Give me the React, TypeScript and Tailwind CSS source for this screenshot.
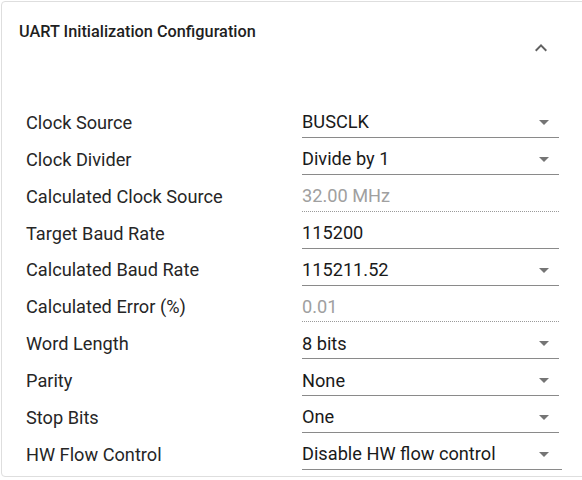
import React from 'react';

type Row = {
  label: string;
  value: string;
  kind: 'select' | 'input' | 'readonly';
};

const rows: Row[] = [
  { label: 'Clock Source', value: 'BUSCLK', kind: 'select' },
  { label: 'Clock Divider', value: 'Divide by 1', kind: 'select' },
  { label: 'Calculated Clock Source', value: '32.00 MHz', kind: 'readonly' },
  { label: 'Target Baud Rate', value: '115200', kind: 'input' },
  { label: 'Calculated Baud Rate', value: '115211.52', kind: 'select' },
  { label: 'Calculated Error (%)', value: '0.01', kind: 'readonly' },
  { label: 'Word Length', value: '8 bits', kind: 'select' },
  { label: 'Parity', value: 'None', kind: 'select' },
  { label: 'Stop Bits', value: 'One', kind: 'select' },
  { label: 'HW Flow Control', value: 'Disable HW flow control', kind: 'select' },
];

function ArrowDrop() {
  return (
    <svg width="24" height="24" viewBox="0 0 24 24" className="shrink-0 fill-[#757575]">
      <path d="M7 10l5 5 5-5z" />
    </svg>
  );
}

export default function App() {
  return (
    <div className="w-[582px] h-[480px] overflow-hidden bg-white pt-px pl-px font-['Roboto',sans-serif]">
      <div className="w-[600px] h-[476px] border border-[#dedede] rounded-[4px] bg-white">
        {/* Header */}
        <div className="flex justify-between h-[102px]">
          <h2 className="pl-[17px] pt-[18px] text-[16.3px] leading-[24px] font-medium text-[#1f1f1f]">
            UART Initialization Configuration
          </h2>
          <svg width="24" height="24" viewBox="0 0 24 24" className="mt-[34px] mr-[47px] fill-[#616161]">
            <path d="M12 8l-6 6 1.41 1.41L12 10.83l4.59 4.58L18 14z" />
          </svg>
        </div>

        {/* Fields */}
        <div className="flex flex-col">
          {rows.map((row, i) => (
            <div key={row.label} className="flex h-[36.9px] pt-[3px]">
              <div className="w-[300px] pl-[24px] h-[31px] flex items-center text-[18.2px] text-[#262626]">
                {row.label}
              </div>
              <div
                className={`h-[31px] flex items-center justify-between text-[18.2px] ${
                  i === rows.length - 1 ? 'w-[260px]' : 'w-[257px]'
                } ${
                  row.kind === 'readonly'
                    ? 'border-b border-dotted border-[#9a9a9a] text-[#a0a0a0]'
                    : 'border-b border-[#8a8a8a] text-[#1a1a1a]'
                }`}
              >
                <span>{row.value}</span>
                {row.kind === 'select' && (
                  <span className={i === rows.length - 1 ? 'mr-[6px]' : 'mr-[3px]'}>
                    <ArrowDrop />
                  </span>
                )}
              </div>
            </div>
          ))}
        </div>
      </div>
    </div>
  );
}
